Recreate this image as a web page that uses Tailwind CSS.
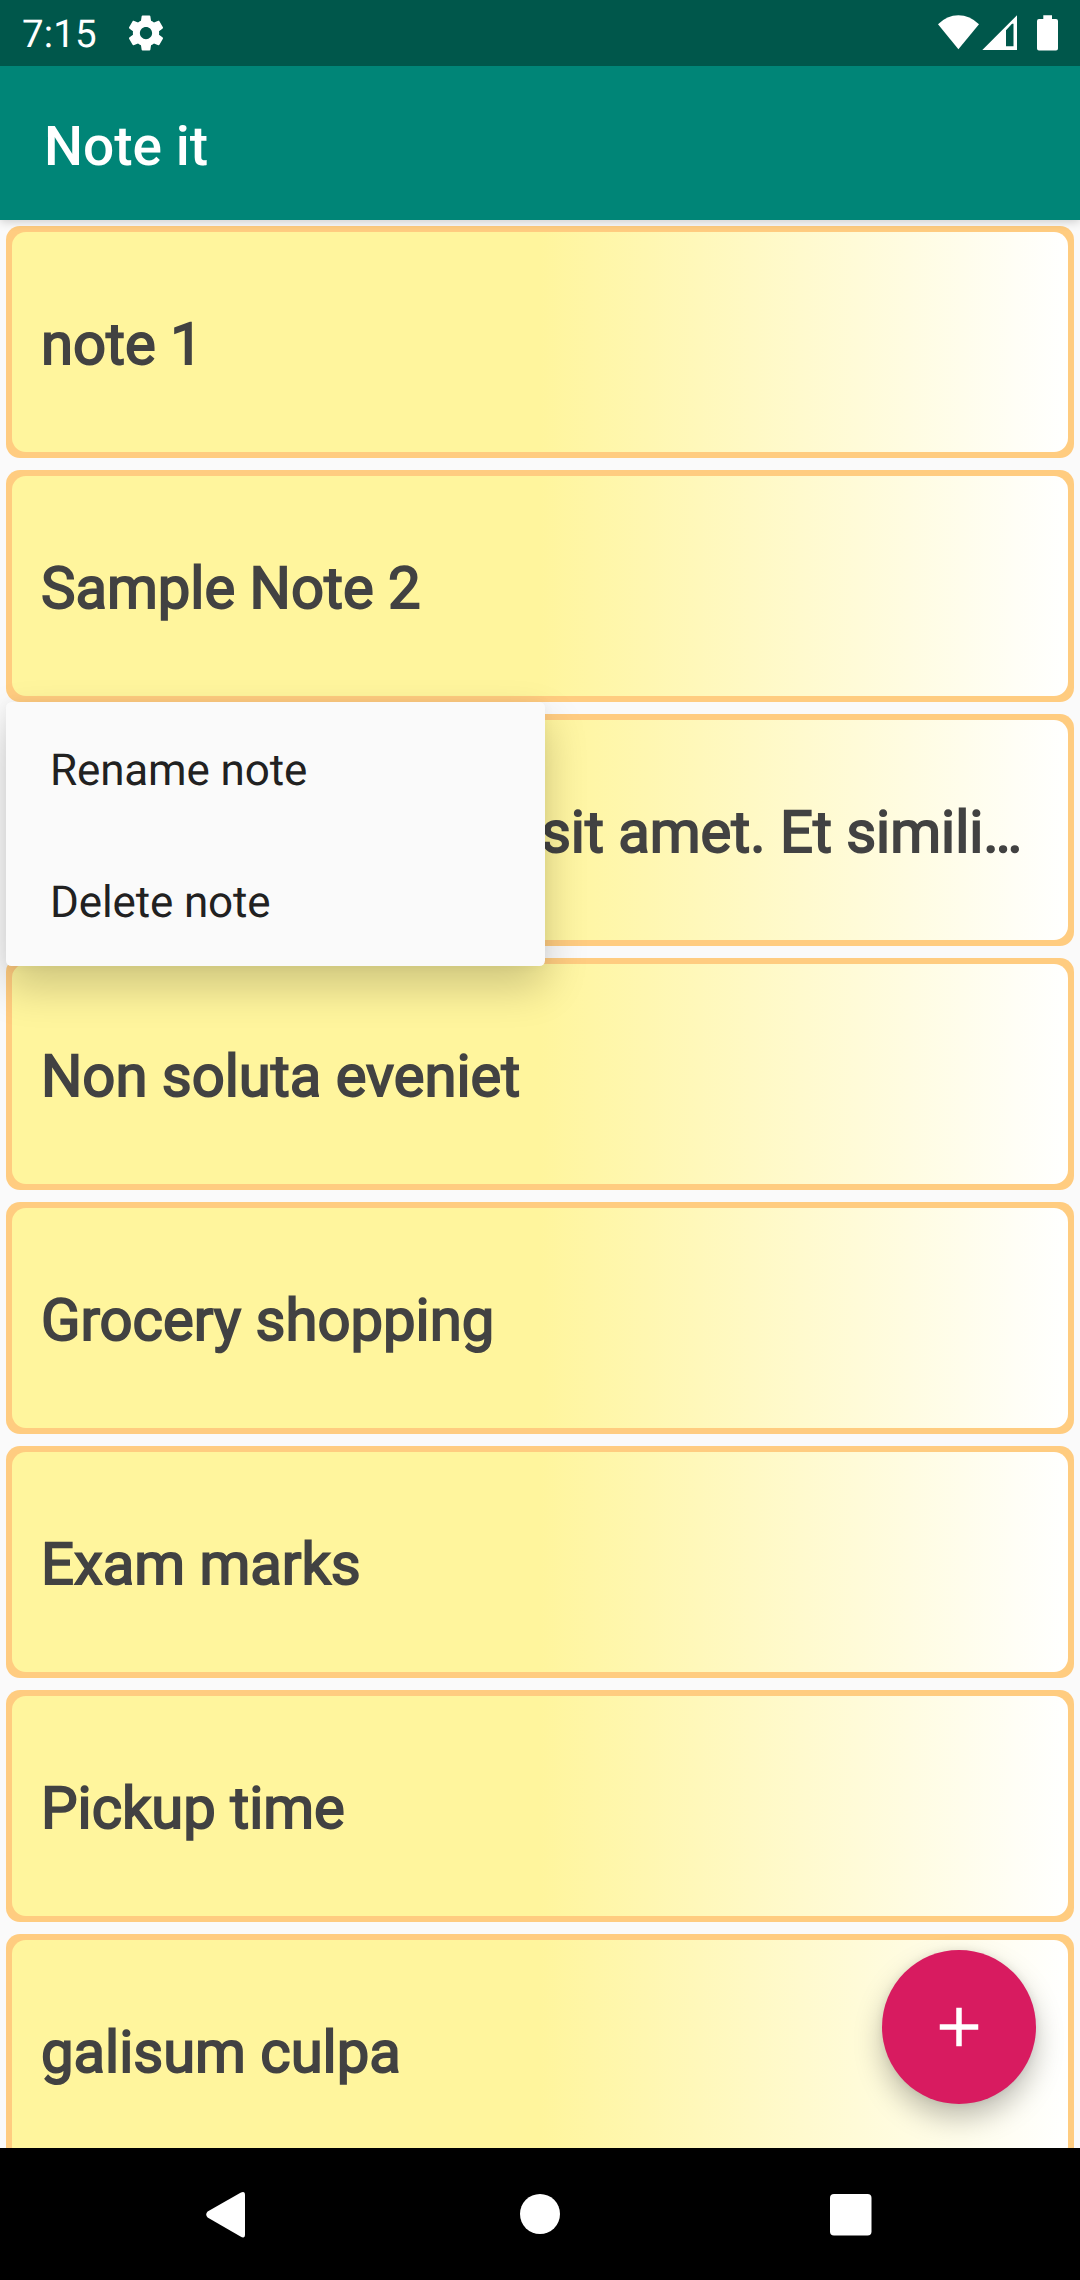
<!DOCTYPE html>
<html lang="en">
<head>
<meta charset="utf-8">
<title>Note it</title>
<script src="https://cdn.jsdelivr.net/npm/@tailwindcss/browser@4"></script>
</head>
<body class="bg-[#fafafa]">
<div class="relative flex h-[2280px] w-[1080px] flex-col overflow-hidden bg-[#fafafa] font-[Roboto,sans-serif] [text-rendering:geometricPrecision]">
  <header class="relative z-10 shrink-0 shadow-[0_2px_9px_rgba(0,0,0,0.18)]">
    <div class="flex h-[66px] items-center bg-[#00574b] pl-[22px] text-white">
      <span class="w-[103px] pt-[3px] text-[38.5px] leading-[66px] tracking-[0.1px]">7:15</span>
      <svg class="size-[42px]" viewBox="0 0 24 24" fill="currentColor"><path d="M19.43 12.98c.04-.32.07-.64.07-.98s-.03-.66-.07-.98l2.11-1.65c.19-.15.24-.42.12-.64l-2-3.46c-.12-.22-.39-.3-.61-.22l-2.49 1c-.52-.4-1.08-.73-1.69-.98l-.38-2.65C14.46 2.18 14.25 2 14 2h-4c-.25 0-.46.18-.49.42l-.38 2.65c-.61.25-1.17.59-1.69.98l-2.49-1c-.23-.09-.49 0-.61.22l-2 3.46c-.13.22-.07.49.12.64l2.11 1.65c-.04.32-.07.65-.07.98s.03.66.07.98l-2.11 1.65c-.19.15-.24.42-.12.64l2 3.46c.12.22.39.3.61.22l2.49-1c.52.4 1.08.73 1.69.98l.38 2.65c.03.24.24.42.49.42h4c.25 0 .46-.18.49-.42l.38-2.65c.61-.25 1.17-.59 1.69-.98l2.49 1c.23.09.49 0 .61-.22l2-3.46c.12-.22.07-.49-.12-.64l-2.11-1.65zM12 15.5c-1.93 0-3.5-1.57-3.5-3.5s1.57-3.5 3.5-3.5 3.5 1.57 3.5 3.5-1.57 3.5-3.5 3.5z"/></svg>
      <svg class="ml-auto mr-[22px] h-[66px] w-[121px]" viewBox="937 0 121 66" fill="currentColor">
        <path d="M958.4 49.3 938 24.3Q947 15.3 958.4 15.3T979 24.3Z"/>
        <path fill-rule="evenodd" d="M982.3 50 1017 15.2V50ZM1006 30.3V46.3H1013.5V23.7L1012 23.7Z"/>
        <path d="M1043.3 15.3H1052V19H1056Q1058 19 1058 21V48.5Q1058 50.5 1056 50.5H1039Q1037 50.5 1037 48.5V21Q1037 19 1039 19H1043.3Z"/>
      </svg>
    </div>
    <div class="flex h-[154px] items-center bg-[#008577] px-11">
      <h1 class="pt-[7px] text-[55px] font-medium leading-[64px] text-white">Note it</h1>
    </div>
  </header>

  <main class="relative min-h-0 flex-1 overflow-hidden">
    <ul class="flex flex-col gap-3 p-1.5 text-[58px] leading-[68px] tracking-[-0.02px] text-[#424242] [-webkit-text-stroke:1.8px_#424242]">
      <li class="h-[232px] shrink-0 rounded-[14px] bg-[#ffcc80] p-1.5"><div class="flex h-full items-center rounded-[14px] bg-linear-to-r/srgb from-[#fff59d] from-50% to-white px-[29px] pt-[5px] whitespace-pre">note 1</div></li>
      <li class="h-[232px] shrink-0 rounded-[14px] bg-[#ffcc80] p-1.5"><div class="flex h-full items-center rounded-[14px] bg-linear-to-r/srgb from-[#fff59d] from-50% to-white px-[29px] pt-[5px] whitespace-pre">Sample Note 2</div></li>
      <li class="h-[232px] shrink-0 rounded-[14px] bg-[#ffcc80] p-1.5"><div class="flex h-full items-center rounded-[14px] bg-linear-to-r/srgb from-[#fff59d] from-50% to-white px-[29px] pt-[5px] whitespace-pre">Lorem ipsum dolor sit amet. Et simili…</div></li>
      <li class="h-[232px] shrink-0 rounded-[14px] bg-[#ffcc80] p-1.5"><div class="flex h-full items-center rounded-[14px] bg-linear-to-r/srgb from-[#fff59d] from-50% to-white px-[29px] pt-[5px] whitespace-pre">Non soluta eveniet</div></li>
      <li class="h-[232px] shrink-0 rounded-[14px] bg-[#ffcc80] p-1.5"><div class="flex h-full items-center rounded-[14px] bg-linear-to-r/srgb from-[#fff59d] from-50% to-white px-[29px] pt-[5px] whitespace-pre">Grocery shopping</div></li>
      <li class="h-[232px] shrink-0 rounded-[14px] bg-[#ffcc80] p-1.5"><div class="flex h-full items-center rounded-[14px] bg-linear-to-r/srgb from-[#fff59d] from-50% to-white px-[29px] pt-[5px] whitespace-pre">Exam marks</div></li>
      <li class="h-[232px] shrink-0 rounded-[14px] bg-[#ffcc80] p-1.5"><div class="flex h-full items-center rounded-[14px] bg-linear-to-r/srgb from-[#fff59d] from-50% to-white px-[29px] pt-[5px] whitespace-pre">Pickup time</div></li>
      <li class="h-[232px] shrink-0 rounded-[14px] bg-[#ffcc80] p-1.5"><div class="flex h-full items-center rounded-[14px] bg-linear-to-r/srgb from-[#fff59d] from-50% to-white px-[29px] pt-[5px] whitespace-pre">galisum culpa</div></li>
    </ul>

    <!-- context menu -->
    <div class="absolute left-1.5 top-[482px] w-[539px] rounded-[5.5px] bg-[#fafafa] text-[44px] tracking-[-0.14px] text-[#212121] shadow-[0_20px_44px_rgba(0,0,0,0.2),0_0_12px_rgba(0,0,0,0.04)]">
      <div class="flex h-[132px] items-center px-11 pt-[4px]">Rename note</div>
      <div class="flex h-[132px] items-center px-11 pt-[4px]">Delete note</div>
    </div>

    <!-- add note -->
    <button class="absolute right-11 bottom-11 flex size-[154px] items-center justify-center rounded-full bg-[#d81b60] text-white shadow-[0_14px_28px_rgba(0,0,0,0.25),0_0_8px_rgba(0,0,0,0.08)]" aria-label="Add note">
      <svg class="size-[66px]" viewBox="0 0 24 24" fill="currentColor"><path d="M19 13h-6v6h-2v-6H5v-2h6V5h2v6h6z"/></svg>
    </button>
  </main>

  <nav class="h-[132px] shrink-0 bg-black text-white">
    <svg class="h-[132px] w-[1080px]" viewBox="0 2148 1080 132" fill="currentColor">
      <path d="M207.6 2211.5 240.5 2192.8Q245 2190.5 245 2195V2234.5Q245 2239 240.5 2236.5L207.6 2217.5Q204.8 2214.5 207.6 2211.5Z"/>
      <circle cx="540" cy="2214" r="20"/>
      <rect x="830" y="2194" width="41.5" height="41.5" rx="4"/>
    </svg>
  </nav>
</div>
</body>
</html>
